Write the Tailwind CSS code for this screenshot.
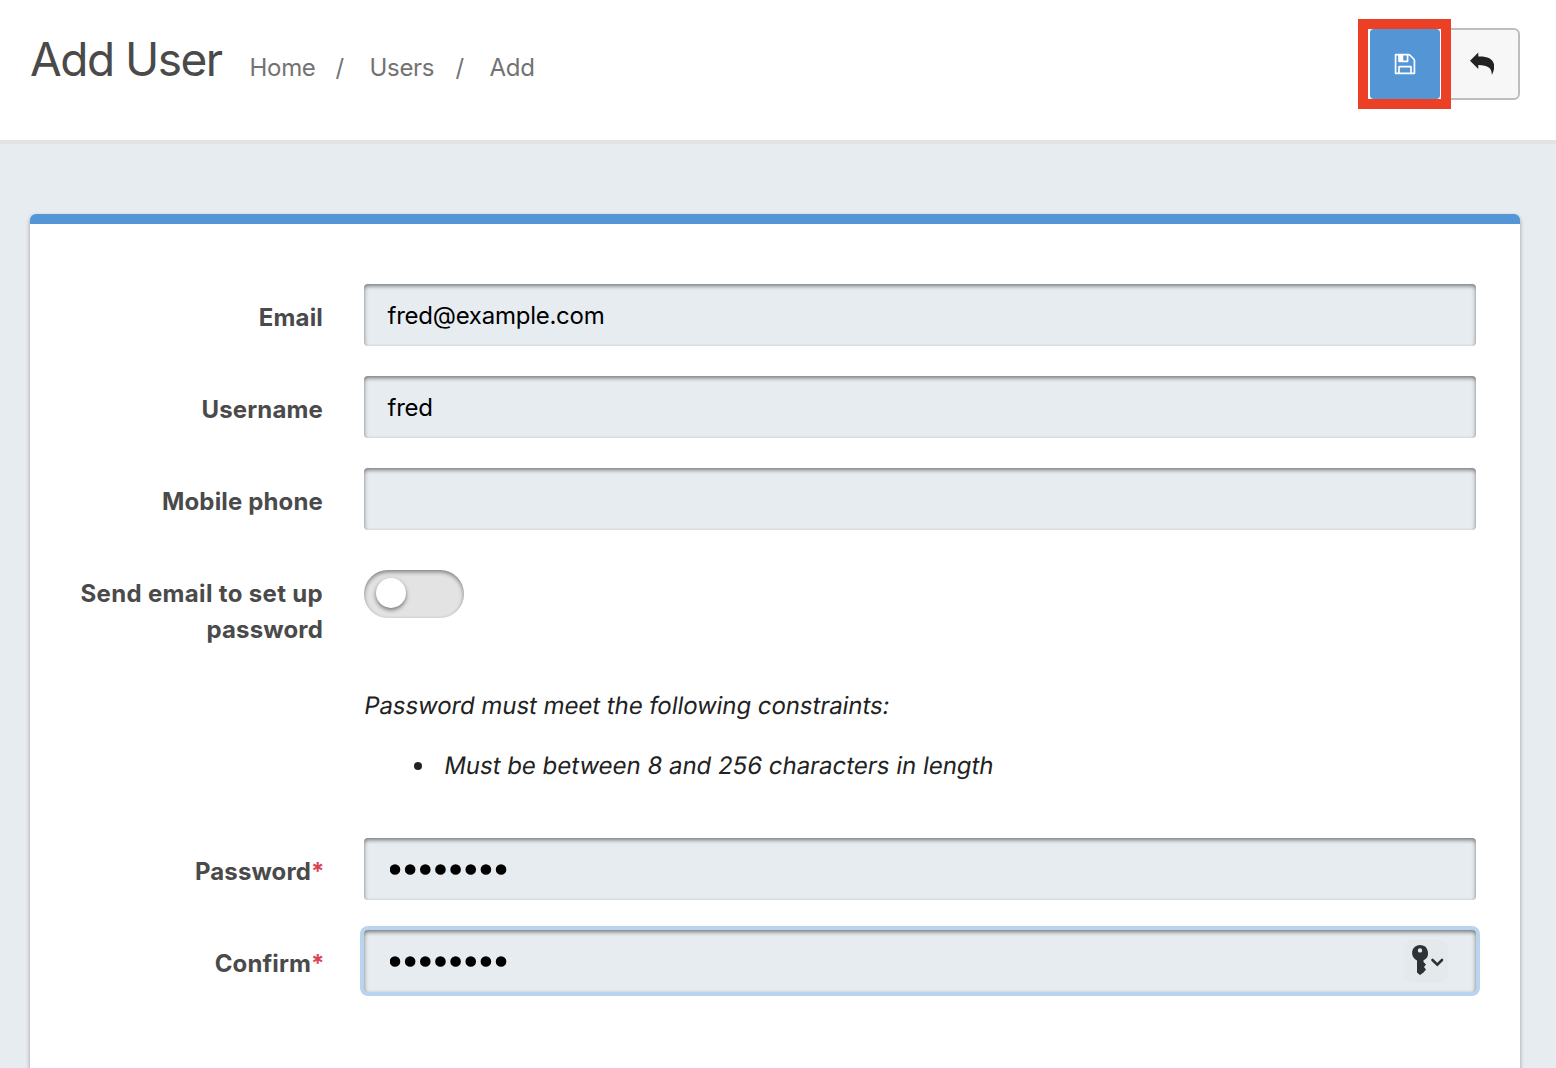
<!DOCTYPE html>
<html lang="en">
<head>
<meta charset="utf-8">
<title>Add User</title>
<script src="https://cdn.jsdelivr.net/npm/@tailwindcss/browser@4"></script>
</head>
<body class="h-[1068px] overflow-hidden bg-[#e7ecf0] font-['Inter',sans-serif] text-2xl leading-9 text-[#222]">
<header class="flex h-36 items-start justify-between border-b-4 border-[#e3e3e3] bg-white pr-9 pl-[30px]">
  <div class="flex items-baseline pt-[31px]">
    <h1 class="w-[219.500px] text-[46px] leading-[56px] tracking-[-1.5px] whitespace-nowrap text-[#4a4a4a]">Add User</h1>
    <nav class="flex tracking-[-0.3px] text-[#737373]">
      <a class="w-[86px]">Home</a><span class="w-[34px]">/</span><a class="w-[86px]">Users</a><span class="w-[34px]">/</span><a>Add</a>
    </nav>
  </div>
  <div class="flex pt-[19px]">
    <div class="z-10 h-[90px] w-[93px] border-[10px] border-[#eb4025] bg-white pl-0.5">
      <button class="flex h-[70px] w-[70px] items-center justify-center rounded bg-[#5395d5] pr-px pb-px text-white">
        <svg class="size-6" viewBox="0 0 1792 1792" fill="currentColor"><path d="M512 1536h768v-384h-768v384zm896 0h128v-896q0-14-10-38.500t-20-34.500l-281-281q-10-10-34-20t-39-10v416q0 40-28 68t-68 28h-576q-40 0-68-28t-28-68v-416h-128v1280h128v-416q0-40 28-68t68-28h832q40 0 68 28t28 68v416zm-384-928v-320q0-13-9.500-22.500t-22.500-9.500h-192q-13 0-22.500 9.500t-9.500 22.500v320q0 13 9.500 22.500t22.500 9.500h192q13 0 22.500-9.500t9.500-22.500zm640 32v928q0 40-28 68t-68 28h-1344q-40 0-68-28t-28-68v-1344q0-40 28-68t68-28h928q40 0 88 20t76 48l280 280q28 28 48 76t20 88z"/></svg>
      </button>
    </div>
    <button class="mt-[9px] -ml-2 flex h-[72px] w-[77px] items-center justify-center rounded-md border-2 border-[#bdbdbd] bg-[#f7f7f7] pb-px text-[#222]">
      <svg class="h-6 w-6" viewBox="0 0 24 24" fill="currentColor"><path d="M0 8.700 8.300 .5V4.600C17.500 4.200 24.200 7 24.200 14.500C24.200 18 23.200 20.500 21.800 23C21.900 16.500 18.500 13 8.300 13V17Z"/></svg>
    </button>
  </div>
</header>
<main class="mt-[70px] mr-9 ml-[30px] h-[900px] rounded-t-md border-t-[10px] border-[#5395d5] bg-white px-11 pt-[60px] shadow-[0_2px_4px_rgba(0,0,0,0.35)]">
  <form class="grid grid-cols-[249px_1112px] gap-x-[41px] font-normal tracking-[-0.25px]">
    <label class="pt-4 pb-10 text-right font-bold tracking-[0.15px] text-[#4a4a4a]">Email</label>
    <div class="flex h-[62px] items-center rounded bg-[#e7ecf0] px-[23.500px] pt-0.5 text-black shadow-[inset_0_2px_4px_rgba(0,0,0,0.5)]">fred@example.com</div>
    <label class="pt-4 pb-10 text-right font-bold tracking-[0.15px] text-[#4a4a4a]">Username</label>
    <div class="flex h-[62px] items-center rounded bg-[#e7ecf0] px-[23.500px] pt-0.5 text-black shadow-[inset_0_2px_4px_rgba(0,0,0,0.5)]">fred</div>
    <label class="pt-4 pb-10 text-right font-bold tracking-[0.15px] text-[#4a4a4a]">Mobile phone</label>
    <div class="h-[62px] rounded bg-[#e7ecf0] shadow-[inset_0_2px_4px_rgba(0,0,0,0.5)]"></div>
    <label class="h-[128px] pt-4 text-right font-bold tracking-[0.15px] text-[#4a4a4a]"><span class="tracking-[0.33px]">Send email to set up</span> password</label>
    <div class="mt-[10px] flex h-12 w-[100px] rounded-full bg-[#e3e3e3] pt-2 pl-3 shadow-[inset_0_2px_4px_rgba(0,0,0,0.45)]"><span class="size-[30px] rounded-full bg-white shadow-[0_2px_4px_rgba(0,0,0,0.5)]"></span></div>
    <div class="col-start-2 h-[150px] tracking-[-0.07px]">
      <p class="-ml-[1.500px] origin-[0_75%] -skew-x-[9deg]">Password must meet the following constraints:</p>
      <ul class="mt-6 flex items-center pl-[50px]"><li class="flex items-center gap-[20.500px]"><span class="size-2 rounded-full bg-[#222]"></span><span class="origin-[0_75%] -skew-x-[9deg] tracking-[-0.02px]">Must be between 8 and 256 characters in length</span></li></ul>
    </div>
    <label class="-mr-[1.500px] pt-4 pb-10 text-right font-bold tracking-[0.1px] text-[#4a4a4a]">Password<span class="text-[#da4453]">*</span></label>
    <div class="flex h-[62px] items-center rounded bg-[#e7ecf0] px-[26px] shadow-[inset_0_2px_4px_rgba(0,0,0,0.5)]">
      <svg class="h-[11px] w-[118px]" viewBox="0 0 118 11"><path d="M5 5.500H117" stroke="#000" stroke-width="10.600" stroke-linecap="round" stroke-dasharray="0 15.150"/></svg>
    </div>
    <label class="-mr-[1.500px] pt-4 pb-10 text-right font-bold tracking-[0.1px] text-[#4a4a4a]">Confirm<span class="text-[#da4453]">*</span></label>
    <div class="flex h-[62px] items-center justify-between rounded bg-[#e7ecf0] pr-7 pl-[26px] shadow-[inset_0_2px_4px_rgba(0,0,0,0.5),0_0_0_4px_#b9d4ee]">
      <svg class="h-[11px] w-[118px]" viewBox="0 0 118 11"><path d="M5 5.500H117" stroke="#000" stroke-width="10.600" stroke-linecap="round" stroke-dasharray="0 15.150"/></svg>
      <svg class="size-11 rounded-[10px] bg-[#e4e9ec]" viewBox="0 0 44 44"><path fill="#2d3236" fill-rule="evenodd" d="M16 6a8 8 0 0 1 3.500 15.200V23l2.500 2.500L20 28l2 2.500L19.500 33.500 16 36l-3-2.500V21.400A8 8 0 0 1 16 6Zm0 3.200a2.200 2.200 0 1 0 0 4.400a2.200 2.200 0 0 0 0-4.400Z"/><path d="m28.500 21 4.800 4.600L38 21" fill="none" stroke="#2d3236" stroke-width="2.600" stroke-linecap="round"/></svg>
    </div>
  </form>
</main>
</body>
</html>
